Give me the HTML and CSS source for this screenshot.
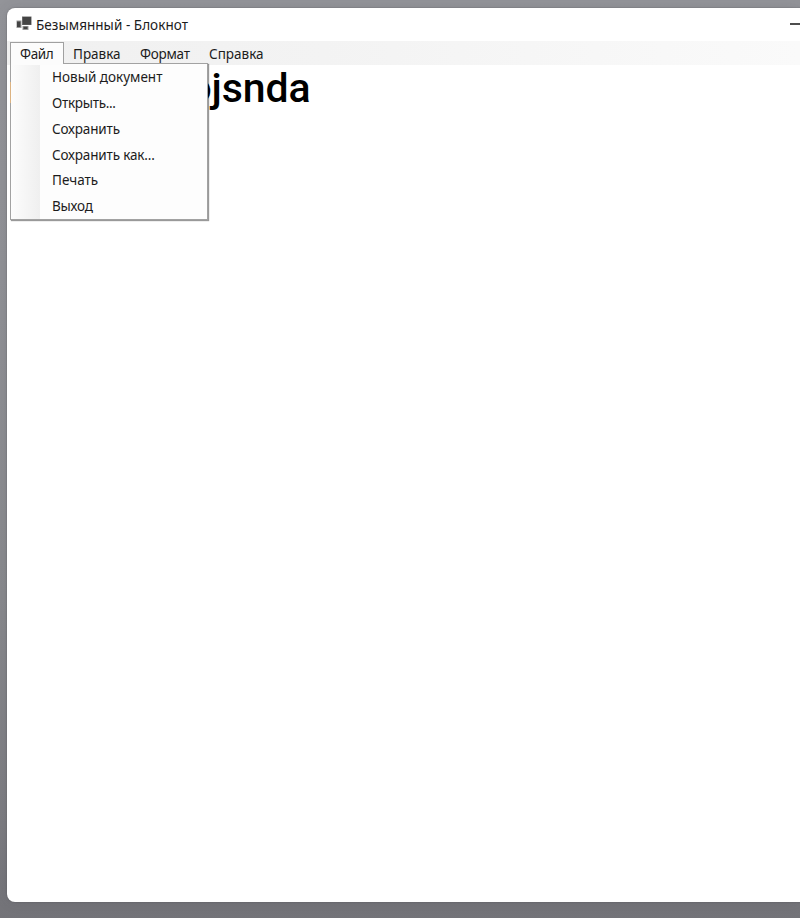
FILE: index.html
```
<!DOCTYPE html>
<html lang="ru">
<head>
<meta charset="utf-8">
<title>Безымянный - Блокнот</title>
<link rel="stylesheet" href="styles.css">
</head>
<body>
<main class="window">
  <header class="titlebar">
    <svg class="app-icon" width="16" height="15" viewBox="0 0 16 15">
      <path fill="#999" d="M.5 4.500h5V12h-5zM6.500 10h6v4h-6z"/>
      <path fill="#666" d="M6 .5h9.500V9H6z"/>
      <path fill="#444" d="M1 5.500h3.500V11H1zM7 1h8v7.500H7zM7.500 10.800h4v2.200h-4z"/>
    </svg>
    <h1 class="title">Безымянный - Блокнот</h1>
    <span class="minimize"></span>
  </header>
  <nav class="menubar">
    <div class="tab active"><span class="file-label">Файл</span>
      <div class="dropdown">
        <div class="item">Новый документ</div>
        <div class="item open">Открыть...</div>
        <div class="item save">Сохранить</div>
        <div class="item save">Сохранить как...</div>
        <div class="item">Печать</div>
        <div class="item exit">Выход</div>
      </div>
    </div>
    <div class="tab edit">Правка</div>
    <div class="tab format">Формат</div>
    <div class="tab help">Справка</div>
  </nav>
  <section class="editor"><i class="fringe"></i><p class="document">ojsnda</p></section>
</main>
</body>
</html>
```
FILE: styles.css
```
* { box-sizing: border-box; }
body {
  margin: 0;
  height: 918px;
  padding: 8px 0 16px 7px;
  overflow: hidden;
  background: linear-gradient(#939499 0%, #909196 30%, #88898d 65%, #7c7c81 90%, #737378 100%);
  font-family: "Noto Sans", "Open Sans", sans-serif;
  font-size: 13.5px;
  color: #1c1c1c;
}
.window {
  height: 894px;
  background: #fff;
  border-radius: 8px 0 0 8px;
  box-shadow: 0 0 1px 1px rgba(80, 80, 85, .2), 0 0 14px rgba(60, 60, 65, .12);
}
.titlebar {
  display: flex;
  height: 33px;
  padding-left: 9px;
}
.app-icon { margin: 8px 4px 0 0; flex: none; }
.title { margin: 0; font-size: 13.5px; font-weight: 400; line-height: 34px; letter-spacing: .04px; white-space: nowrap; }
.minimize { width: 10px; height: 2px; margin: 15px 0 0 auto; background: #4d4d4d; }
.menubar {
  display: flex;
  height: 24px;
  padding: 1px 0 0 3px;
  background: linear-gradient(90deg, #f0f0f0, #f3f3f3 40%, #fafafa 100%);
}
.tab { height: 23px; line-height: 24px; padding-left: 9px; white-space: nowrap; }
.tab.active {
  position: relative;
  width: 54px;
  line-height: 22px;
  background: #fcfcfc;
  border: 1px solid #a0a0a0;
  border-bottom: 0;
}
.file-label { letter-spacing: -.4px; }
.edit { width: 66px; }
.format { width: 70px; padding-left: 10px; letter-spacing: -.25px; }
.dropdown {
  position: absolute;
  left: -1px;
  top: 20px;
  width: 198px;
  height: 157px;
  padding: 1px 0 0 41px;
  background: linear-gradient(90deg, #fcfcfc, #efefef) 1px 0 / 28px 100% no-repeat, #fdfdfd;
  border: 1px solid #a2a2a2;
  box-shadow: 1px 1px 1px rgba(0, 0, 0, .4);
  z-index: 2;
}
.dropdown::before {
  content: "";
  position: absolute;
  left: 0;
  top: -1px;
  width: 52px;
  height: 2px;
  background: #fcfcfc;
}
.item { height: 25.850px; line-height: 25px; }
.open { letter-spacing: -.3px; }
.save { letter-spacing: -.16px; }
.exit { letter-spacing: -.2px; }
.editor { display: flex; padding-left: 3px; }
.fringe { position: relative; z-index: 3; width: 1px; height: 21px; margin-top: 17px; background: #dcb382; }
.document {
  width: 299.5px;
  margin: 0;
  text-align: right;
  font: 500 41px/47px Roboto, sans-serif;
  letter-spacing: -.1px;
  color: #000;
}
```
